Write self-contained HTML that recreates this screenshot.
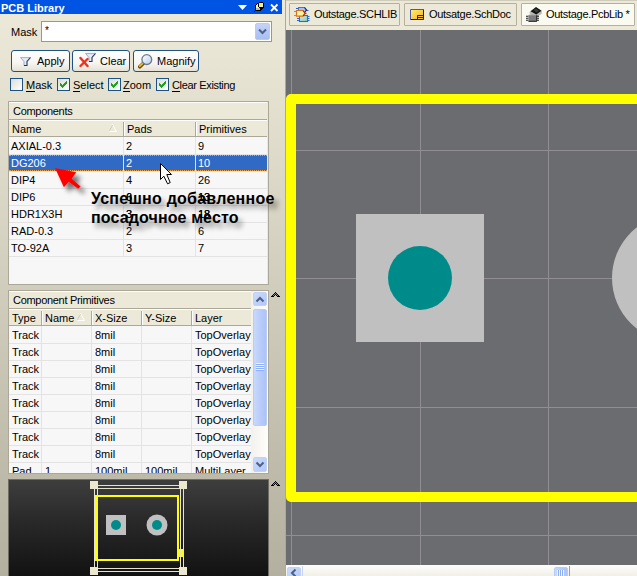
<!DOCTYPE html>
<html><head><meta charset="utf-8">
<style>
*{box-sizing:border-box}
html,body{margin:0;padding:0;width:637px;height:576px;overflow:hidden;background:#ECE9D8;font-family:"Liberation Sans",sans-serif;font-size:11px;color:#000}
.a{position:absolute}
#panel{left:0;top:0;width:285px;height:576px;background:linear-gradient(#ECE9D8 0px,#ECE9D8 14px,#B4B09F 576px)}
#sep{left:285px;top:0;width:1px;height:576px;background:#ACA899}
#title{left:0;top:0;width:282px;height:14px;background:#0054E3;color:#fff;font-weight:bold;font-size:11px;line-height:14px;padding-left:1px;padding-top:1px;overflow:hidden}
#canvas{left:286px;top:30px;width:351px;height:535px;background:#6B6C70;overflow:hidden}
#tabs{left:286px;top:0;width:351px;height:30px;background:#ECE9D8;border-top:1px solid #D0CCBC}
.tab{position:absolute;top:2px;height:23px;border:1px solid #B4B09C;border-radius:1px;background:#ECE9D8;line-height:21px;white-space:nowrap}
.tab.act{background:#FBFAF0}
#hscroll{left:286px;top:565px;width:351px;height:11px;background:linear-gradient(#FDFDFB,#F1EFE8)}
.btn{height:22px;border:1px solid #1F5284;border-radius:3px;background:linear-gradient(#FFFFFF,#F6F5F1 60%,#E4E1D6)}
.btn span{position:absolute;top:4px;line-height:13px}
.cb{width:13px;height:13px;border:1px solid #1C5180;background:linear-gradient(135deg,#DCDBD5,#FFFFFF)}
.lbl{top:79px;line-height:13px}
u{text-decoration:none;border-bottom:1px solid #000;display:inline-block;line-height:11px}
.box{border:1px solid #ACA899;border-right-color:#ACA899;border-bottom-color:#ACA899;background:#ECE9D8}
.hdr1{background:#ECE9D8;border-top:1px solid #fff;border-bottom:1px solid #ACA899}
.hdr2{background:#ECE9D8;border-top:1px solid #fff;border-bottom:1px solid #ACA899}
.vsep{width:1px;background:#ACA899;box-shadow:1px 0 0 #fff}
.gl{height:1px;background:#E3E3E3}
.cell{line-height:13px;white-space:nowrap}
.sel{background:#316AC5;border-top:1px dotted #F0A030;border-bottom:1px dotted #F0A030}
.sbb{border-radius:2px;background:linear-gradient(135deg,#CCDAFB,#B2C8F8);border:1px solid #C2D2F6}
.sbt{border-radius:2px;background:linear-gradient(90deg,#C9D8FC,#B9CDFA 50%,#ABC3F6);border:1px solid #B8CCF4}
.tt{position:absolute;top:4px;line-height:13px;letter-spacing:-0.3px}
.rus{font-weight:bold;font-size:16px;line-height:19px;letter-spacing:0.25px;white-space:nowrap;text-shadow:4px 5px 5px rgba(0,0,0,0.42)}
</style></head><body>
<div id="panel" class="a"></div>
<div id="sep" class="a"></div>
<!--COMP-->
<div class="a box" style="left:8px;top:101px;width:261px;height:184px"></div>
<div class="a hdr1" style="left:9px;top:102px;width:258px;height:18px"><span class="a" style="left:4px;top:2px;letter-spacing:-0.3px">Components</span></div>
<div class="a hdr2" style="left:9px;top:120px;width:258px;height:17px"></div>
<div class="a" style="left:12px;top:123px;line-height:13px">Name</div>
<svg class="a" style="left:108px;top:124px" width="10" height="9"><path d="M4.5 0.5 L8.5 7.5 H0.5 Z" fill="none" stroke="#FFFFFF" stroke-width="1"/><path d="M4.5 1 L0.8 7.5" stroke="#C9C6B8" stroke-width="1"/></svg>
<div class="a vsep" style="left:123px;top:122px;height:14px"></div>
<div class="a" style="left:127px;top:123px;line-height:13px">Pads</div>
<div class="a vsep" style="left:195px;top:122px;height:14px"></div>
<div class="a" style="left:199px;top:123px;line-height:13px">Primitives</div>
<div class="a" style="left:9px;top:137px;width:258px;height:147px;background:#F7F7F7"></div>
<div class="a cell" style="left:11px;top:140px;">AXIAL-0.3</div>
<div class="a cell" style="left:126px;top:140px;">2</div>
<div class="a cell" style="left:198px;top:140px;">9</div>
<div class="a gl" style="left:9px;top:154px;width:258px"></div>
<div class="a sel" style="left:9px;top:155px;width:258px;height:16px"></div>
<div class="a cell" style="left:11px;top:157px;color:#fff;">DG206</div>
<div class="a cell" style="left:126px;top:157px;color:#fff;">2</div>
<div class="a cell" style="left:198px;top:157px;color:#fff;">10</div>
<div class="a gl" style="left:9px;top:171px;width:258px"></div>
<div class="a cell" style="left:11px;top:174px;">DIP4</div>
<div class="a cell" style="left:126px;top:174px;">4</div>
<div class="a cell" style="left:198px;top:174px;">26</div>
<div class="a gl" style="left:9px;top:188px;width:258px"></div>
<div class="a cell" style="left:11px;top:191px;">DIP6</div>
<div class="a cell" style="left:126px;top:191px;">6</div>
<div class="a cell" style="left:198px;top:191px;">13</div>
<div class="a gl" style="left:9px;top:205px;width:258px"></div>
<div class="a cell" style="left:11px;top:208px;">HDR1X3H</div>
<div class="a cell" style="left:126px;top:208px;">3</div>
<div class="a cell" style="left:198px;top:208px;">18</div>
<div class="a gl" style="left:9px;top:222px;width:258px"></div>
<div class="a cell" style="left:11px;top:225px;">RAD-0.3</div>
<div class="a cell" style="left:126px;top:225px;">2</div>
<div class="a cell" style="left:198px;top:225px;">6</div>
<div class="a gl" style="left:9px;top:239px;width:258px"></div>
<div class="a cell" style="left:11px;top:242px;">TO-92A</div>
<div class="a cell" style="left:126px;top:242px;">3</div>
<div class="a cell" style="left:198px;top:242px;">7</div>
<div class="a gl" style="left:9px;top:256px;width:258px"></div>
<div class="a" style="left:123px;top:137px;width:1px;height:119px;background:#E3E3E3"></div>
<div class="a" style="left:195px;top:137px;width:1px;height:119px;background:#E3E3E3"></div>
<!--/COMP-->
<!--PRIM-->
<div class="a box" style="left:8px;top:290px;width:261px;height:184px"></div>
<div class="a hdr1" style="left:9px;top:291px;width:242px;height:18px"><span class="a" style="left:4px;top:2px;letter-spacing:-0.3px">Component Primitives</span></div>
<div class="a hdr2" style="left:9px;top:309px;width:242px;height:17px"></div>
<div class="a" style="left:12px;top:312px;line-height:13px">Type</div>
<div class="a vsep" style="left:41px;top:311px;height:14px"></div>
<div class="a" style="left:45px;top:312px;line-height:13px">Name</div>
<div class="a vsep" style="left:91px;top:311px;height:14px"></div>
<div class="a" style="left:95px;top:312px;line-height:13px">X-Size</div>
<div class="a vsep" style="left:141px;top:311px;height:14px"></div>
<div class="a" style="left:145px;top:312px;line-height:13px">Y-Size</div>
<div class="a vsep" style="left:191px;top:311px;height:14px"></div>
<div class="a" style="left:195px;top:312px;line-height:13px">Layer</div>
<svg class="a" style="left:76px;top:313px" width="10" height="9"><path d="M4.5 0.5 L8.5 7.5 H0.5 Z" fill="none" stroke="#FFFFFF" stroke-width="1"/><path d="M4.5 1 L0.8 7.5" stroke="#C9C6B8" stroke-width="1"/></svg>
<div class="a" style="left:9px;top:326px;width:242px;height:147px;background:#F7F7F7;overflow:hidden" id="prim">
<div class="a cell" style="left:3px;top:3px">Track</div>
<div class="a cell" style="left:86px;top:3px">8mil</div>
<div class="a cell" style="left:186px;top:3px">TopOverlay</div>
<div class="a gl" style="left:0;top:17px;width:242px"></div>
<div class="a cell" style="left:3px;top:20px">Track</div>
<div class="a cell" style="left:86px;top:20px">8mil</div>
<div class="a cell" style="left:186px;top:20px">TopOverlay</div>
<div class="a gl" style="left:0;top:34px;width:242px"></div>
<div class="a cell" style="left:3px;top:37px">Track</div>
<div class="a cell" style="left:86px;top:37px">8mil</div>
<div class="a cell" style="left:186px;top:37px">TopOverlay</div>
<div class="a gl" style="left:0;top:51px;width:242px"></div>
<div class="a cell" style="left:3px;top:54px">Track</div>
<div class="a cell" style="left:86px;top:54px">8mil</div>
<div class="a cell" style="left:186px;top:54px">TopOverlay</div>
<div class="a gl" style="left:0;top:68px;width:242px"></div>
<div class="a cell" style="left:3px;top:71px">Track</div>
<div class="a cell" style="left:86px;top:71px">8mil</div>
<div class="a cell" style="left:186px;top:71px">TopOverlay</div>
<div class="a gl" style="left:0;top:85px;width:242px"></div>
<div class="a cell" style="left:3px;top:88px">Track</div>
<div class="a cell" style="left:86px;top:88px">8mil</div>
<div class="a cell" style="left:186px;top:88px">TopOverlay</div>
<div class="a gl" style="left:0;top:102px;width:242px"></div>
<div class="a cell" style="left:3px;top:105px">Track</div>
<div class="a cell" style="left:86px;top:105px">8mil</div>
<div class="a cell" style="left:186px;top:105px">TopOverlay</div>
<div class="a gl" style="left:0;top:119px;width:242px"></div>
<div class="a cell" style="left:3px;top:122px">Track</div>
<div class="a cell" style="left:86px;top:122px">8mil</div>
<div class="a cell" style="left:186px;top:122px">TopOverlay</div>
<div class="a gl" style="left:0;top:136px;width:242px"></div>
<div class="a cell" style="left:3px;top:139px">Pad</div>
<div class="a cell" style="left:36px;top:139px">1</div>
<div class="a cell" style="left:86px;top:139px">100mil</div>
<div class="a cell" style="left:136px;top:139px">100mil</div>
<div class="a cell" style="left:186px;top:139px">MultiLayer</div>
<div class="a" style="left:32px;top:0;width:1px;height:147px;background:#E3E3E3"></div>
<div class="a" style="left:82px;top:0;width:1px;height:147px;background:#E3E3E3"></div>
<div class="a" style="left:132px;top:0;width:1px;height:147px;background:#E3E3E3"></div>
<div class="a" style="left:182px;top:0;width:1px;height:147px;background:#E3E3E3"></div>
</div>
<div class="a" style="left:251px;top:291px;width:17px;height:182px;background:linear-gradient(90deg,#F3F1EC,#FEFEFB)"></div>
<div class="a sbb" style="left:253px;top:292px;width:14px;height:14px"></div>
<svg class="a" style="left:255px;top:296px" width="10" height="7"><path d="M1.5 5.5 L5 2 L8.5 5.5" stroke="#4D6185" stroke-width="2" fill="none"/></svg>
<div class="a sbt" style="left:253px;top:309px;width:14px;height:117px"></div>
<svg class="a" style="left:256px;top:363px" width="8" height="8"><g stroke="#EEF3FE" stroke-width="1"><path d="M0 0.5H8M0 2.5H8M0 4.5H8M0 6.5H8"/></g><g stroke="#8CB0F8" stroke-width="1"><path d="M0 1.5H8M0 3.5H8M0 5.5H8M0 7.5H8"/></g></svg>
<div class="a sbb" style="left:253px;top:457px;width:14px;height:15px"></div>
<svg class="a" style="left:255px;top:461px" width="10" height="7"><path d="M1.5 1.5 L5 5 L8.5 1.5" stroke="#4D6185" stroke-width="2" fill="none"/></svg>
<svg class="a" style="left:271px;top:292px" width="9" height="5" shape-rendering="crispEdges"><path d="M4 1h1v1h-1zM3 2h1v1h-1zM5 2h1v1h-1zM2 3h1v1h-1zM6 3h1v1h-1z" fill="#8A887C"/><path d="M4 0h1v1h-1zM3 1h1v1h-1zM5 1h1v1h-1zM2 2h1v1h-1zM4 2h1v1h-1zM6 2h1v1h-1zM1 3h1v1h-1zM3 3h1v1h-1zM5 3h1v1h-1zM7 3h1v1h-1zM0 4h1v1h-1zM1 4h1v1h-1zM2 4h1v1h-1zM6 4h1v1h-1zM7 4h1v1h-1zM8 4h1v1h-1z" fill="#000"/></svg>
<!--/PRIM-->
<!--PREV-->
<div class="a" style="left:8px;top:479px;width:261px;height:97px;background:#6E6C64"></div>
<div class="a" style="left:9px;top:480px;width:259px;height:96px;background:linear-gradient(#3E3E3E,#2A2A2A 40%,#121212)"></div>
<svg class="a" style="left:0;top:470px" width="290" height="106">

<rect x="96" y="26" width="82" height="64" stroke="#FFFF00" stroke-width="2" fill="none" shape-rendering="crispEdges"/>
<rect x="179" y="79" width="4" height="8" fill="#FFFF00" shape-rendering="crispEdges"/>
<rect x="180" y="81" width="1" height="4" fill="#1A1A1A" shape-rendering="crispEdges"/>
<rect x="106" y="45" width="20" height="20" fill="#C0C0C0"/>
<circle cx="116" cy="55" r="5" fill="#008B8B"/>
<circle cx="157" cy="55" r="10.5" fill="#C0C0C0"/>
<circle cx="157" cy="55" r="5" fill="#008B8B"/>
<g stroke="#E8E4CC" stroke-width="1" fill="none">
<path d="M94 15.5 H183 M94 18.5 H183 M94 98.5 H183 M94 101.5 H183"/>
<path d="M94.5 15 V101 M97.5 15 V101 M180.5 15 V101 M183.5 15 V101"/>
</g>
<g fill="#ECE8D0">
<rect x="90" y="11" width="8" height="8"/><rect x="179" y="11" width="8" height="8"/>
<rect x="90" y="97" width="8" height="8"/><rect x="179" y="97" width="8" height="8"/>
</g>
</svg>
<svg class="a" style="left:271px;top:481px" width="9" height="5" shape-rendering="crispEdges"><path d="M4 1h1v1h-1zM3 2h1v1h-1zM5 2h1v1h-1zM2 3h1v1h-1zM6 3h1v1h-1z" fill="#8A887C"/><path d="M4 0h1v1h-1zM3 1h1v1h-1zM5 1h1v1h-1zM2 2h1v1h-1zM4 2h1v1h-1zM6 2h1v1h-1zM1 3h1v1h-1zM3 3h1v1h-1zM5 3h1v1h-1zM7 3h1v1h-1zM0 4h1v1h-1zM1 4h1v1h-1zM2 4h1v1h-1zM6 4h1v1h-1zM7 4h1v1h-1zM8 4h1v1h-1z" fill="#000"/></svg>
<!--/PREV-->
<div id="title" class="a">PCB Library</div>
<svg class="a" style="left:236px;top:0px" width="46" height="14" shape-rendering="crispEdges">
<path d="M2 5 H11 L6.5 10 Z" fill="#fff" shape-rendering="auto"/>
<g transform="translate(16,0)">
<path d="M7 2 H11 V3 H12 V8 H11 V9 H10 V10 H9 V11 H3 V5 H4 V4 H5 V3 H7 Z" fill="#000"/>
<rect x="7" y="3" width="4" height="4" fill="#E8E8D8"/>
<rect x="7" y="3" width="3" height="2" fill="#FFFF00"/>
<rect x="8" y="5" width="1" height="1" fill="#FFFF00"/>
<rect x="4" y="5" width="2" height="3" fill="#FFFF40"/>
<rect x="5" y="4" width="1" height="1" fill="#FFFF40"/>
<rect x="6" y="7" width="1" height="1" fill="#FFFF40"/>
<rect x="4" y="8" width="4" height="2" fill="#B8B8B0"/>
<rect x="5" y="6" width="1" height="2" fill="#F0F0E8"/>
<rect x="2" y="11" width="1" height="1" fill="#000"/>
</g>
<path d="M35 4.5 L41.5 11 M41.5 4.5 L35 11" stroke="#fff" stroke-width="1.8" shape-rendering="auto"/>
</svg>
<div class="a" style="left:11px;top:26px;line-height:13px">Mask</div>
<div class="a" id="maskin" style="left:41px;top:21px;width:231px;height:21px;border:1px solid #7F9DB9;background:#fff"></div>
<div class="a" style="left:45px;top:24px;font-size:10px;line-height:13px">*</div>
<div class="a" style="left:255px;top:23px;width:15px;height:17px;border-radius:2px;background:linear-gradient(#C6D3F7,#B4C8F6 50%,#A9BEF1);border:1px solid #B9CBF3"></div>
<svg class="a" style="left:258px;top:28px" width="9" height="7"><path d="M1 1.5 L4.5 5 L8 1.5" stroke="#4D6185" stroke-width="2" fill="none"/></svg>
<div class="btn a" style="left:11px;top:50px;width:59px"><svg class="a" style="left:8px;top:6px" width="13" height="10"><path d="M0.5 0.5 H10.5 L7 4.5 V8.5 H4 V4.5 Z" fill="#E6EBF5"/><path d="M0.5 0.5 H10.5" stroke="#A4B6DA" stroke-width="1.2"/><path d="M0.5 0.5 L4 4.5 V8.5" stroke="#9AAAC8" stroke-width="1" fill="none"/><path d="M10.5 0.5 L7 4.5 V8.5 H4" stroke="#1E3462" stroke-width="1.1" fill="none"/></svg><span style="left:25px">Apply</span></div>
<div class="btn a" style="left:72px;top:50px;width:58px"><svg class="a" style="left:6px;top:1px" width="26" height="17"><g transform="translate(6,1)"><path d="M0.5 0.5 H10.5 L7 4.5 V8.5 H4 V4.5 Z" fill="#E6EBF5"/><path d="M0.5 0.5 H10.5" stroke="#A4B6DA" stroke-width="1.2"/><path d="M0.5 0.5 L4 4.5 V8.5" stroke="#9AAAC8" stroke-width="1" fill="none"/><path d="M10.5 0.5 L7 4.5 V8.5 H4" stroke="#1E3462" stroke-width="1.1" fill="none"/></g><path d="M1.5 6 L8.5 14 M8.5 7 L1.5 14" stroke="#F0301A" stroke-width="2.4" stroke-linecap="round"/></svg><span style="left:27px">Clear</span></div>
<div class="btn a" style="left:133px;top:50px;width:66px"><svg class="a" style="left:4px;top:3px" width="16" height="16"><path d="M1.8 12.8 L5.2 9.4" stroke="#6A4A08" stroke-width="3.6" stroke-linecap="round"/><path d="M1.8 12.2 L5 9.2" stroke="#E8C040" stroke-width="1.8" stroke-linecap="round"/><circle cx="8.8" cy="5.6" r="4.9" fill="url(#lens)" stroke="#707888" stroke-width="1.3"/><defs><linearGradient id="lens" x1="0" y1="0" x2="1" y2="1"><stop offset="0" stop-color="#FFFFFF"/><stop offset="1" stop-color="#B9CCF0"/></linearGradient></defs></svg><span style="left:23px">Magnify</span></div>
<div class="cb a" style="left:10px;top:78px"></div><div class="a lbl" style="left:26px"><u>M</u>ask</div>
<div class="cb a on" style="left:57px;top:78px"><svg class="a" style="left:2px;top:2px" width="7" height="7" shape-rendering="crispEdges"><path d="M6 0h1v3h-1zM5 1h1v3h-1zM4 2h1v3h-1zM3 3h1v3h-1zM2 4h1v3h-1zM1 3h1v3h-1zM0 2h1v3h-1z" fill="#21A121"/></svg></div><div class="a lbl" style="left:73px"><u>S</u>elect</div>
<div class="cb a on" style="left:108px;top:78px"><svg class="a" style="left:2px;top:2px" width="7" height="7" shape-rendering="crispEdges"><path d="M6 0h1v3h-1zM5 1h1v3h-1zM4 2h1v3h-1zM3 3h1v3h-1zM2 4h1v3h-1zM1 3h1v3h-1zM0 2h1v3h-1z" fill="#21A121"/></svg></div><div class="a lbl" style="left:123px"><u>Z</u>oom</div>
<div class="cb a on" style="left:156px;top:78px"><svg class="a" style="left:2px;top:2px" width="7" height="7" shape-rendering="crispEdges"><path d="M6 0h1v3h-1zM5 1h1v3h-1zM4 2h1v3h-1zM3 3h1v3h-1zM2 4h1v3h-1zM1 3h1v3h-1zM0 2h1v3h-1z" fill="#21A121"/></svg></div><div class="a lbl" style="left:172px;letter-spacing:-0.35px"><u>C</u>lear Existing</div>
<div id="tabs" class="a">
  <div class="tab" style="left:3px;width:111px"><span class="tt" style="left:24px">Outstage.SCHLIB</span>
<svg class="a" style="left:2px;top:0px" width="20" height="20">
<defs><linearGradient id="y1" x1="0" y1="0" x2="1" y2="1"><stop offset="0" stop-color="#FFFFF0"/><stop offset="1" stop-color="#FFE860"/></linearGradient>
<linearGradient id="t1" x1="0" y1="0" x2="1" y2="1"><stop offset="0" stop-color="#C8F0E0"/><stop offset="1" stop-color="#90C8B8"/></linearGradient></defs>
<path d="M4 4.5 H6.5 M14 6.5 H16.5" stroke="#2060D0" stroke-width="1.2"/>
<path d="M6.5 3.5 H12.5 L14.5 6 L12.5 8.5 H6.5 Z" fill="#A8C0F4" stroke="#3A78E8" stroke-width="1.1"/>
<path d="M12.5 3.5 L14.5 6 L12.5 8.5" stroke="#1A2A6A" stroke-width="1.1" fill="none"/>
<path d="M5 14.5 H7.5 M5 16.5 H7.5 M15.5 12.5 H17.5 M15.5 14.5 H17.5 M15.5 16.5 H17.5" stroke="#2A68D8" stroke-width="1.2"/>
<rect x="7.5" y="11.5" width="8" height="6" fill="url(#t1)" stroke="#2A68D8" stroke-width="1.1"/>
<path d="M2 7.5 H4.5 M2 11.5 H4.5" stroke="#F08010" stroke-width="1.2"/>
<path d="M4.5 6.5 H11 L13 9.3 L11 12.2 H4.5 Z" fill="url(#y1)" stroke="#E07010" stroke-width="1.2"/>
<path d="M11 6.5 L13 9.3 L11 12.2 M13 9.3 H14.5" stroke="#A02000" stroke-width="1" fill="none"/>
</svg></div>
  <div class="tab" style="left:118px;width:113px"><span class="tt" style="left:24px">Outsatge.SchDoc</span>
<svg class="a" style="left:5px;top:5px" width="15" height="12">
<defs><linearGradient id="sd" x1="0" y1="0" x2="1" y2="1"><stop offset="0" stop-color="#FFF070"/><stop offset="1" stop-color="#F5B020"/></linearGradient></defs>
<rect x="0.5" y="0.5" width="13" height="10" fill="url(#sd)"/>
<path d="M0.5 10.5 V0.5 H13.5" stroke="#4A5AA8" stroke-width="1" fill="none"/>
<path d="M13.5 0.5 V10.5 H0.5" stroke="#2A1E10" stroke-width="1" fill="none"/>
<path d="M7.5 10.5 V6.5 H13.5 M8 8.5 H13" stroke="#3A2A10" stroke-width="1" fill="none"/>
<path d="M8 7.5 H13 M8 9.5 H13" stroke="#F8C030" stroke-width="1"/>
</svg></div>
  <div class="tab act" style="left:235px;width:114px"><span class="tt" style="left:24px">Outstage.PcbLib *</span>
<svg class="a" style="left:2px;top:0px" width="20" height="20">
<path d="M5.5 8 L12 3.5 L18 7 L17.5 10 L12.5 13 L6 10.5 Z" fill="#B8B8B4"/>
<path d="M6.5 7.3 L12 3 L17.5 6.8 L12.3 10.6 Z" fill="#141414"/>
<path d="M9.5 6 L12 4.5 L15 6.8 L12.5 8.5 Z" fill="#3A3A3A"/>
<path d="M2 12.3 H4.5 M2 14.3 H4.5 M2 16.3 H4.5 M12.5 12.3 H15 M12.5 14.3 H15 M12.5 16.3 H15" stroke="#1A1A1A" stroke-width="1.1"/>
<rect x="4.5" y="11" width="8.2" height="6.7" fill="#7E7E7E"/>
<path d="M4.5 17.3 H12.7 V11" stroke="#222" stroke-width="1" fill="none"/>
<path d="M4.5 11.2 H12.5" stroke="#9A9A9A" stroke-width="0.8"/>
</svg></div>
</div>
<div id="canvas" class="a"><svg width="351" height="535" style="position:absolute;left:0;top:0">
<g fill="#918E93">
<rect x="5" y="0" width="1" height="535"/><rect x="134" y="0" width="1" height="535"/><rect x="262" y="0" width="1" height="535"/>
<rect x="0" y="120" width="351" height="1"/><rect x="0" y="248" width="351" height="1"/><rect x="0" y="377" width="351" height="1"/><rect x="0" y="505" width="351" height="1"/>
</g>
<path d="M5 69 H400 V467 H5 Z" stroke="#FFFF00" stroke-width="10" stroke-linecap="round" stroke-linejoin="round" fill="none"/>
<rect x="70" y="184" width="128" height="128" fill="#C0C0C0"/>
<circle cx="134" cy="248" r="32" fill="#008B8B"/>
<circle cx="390" cy="248" r="64" fill="#C0C0C0"/>
</svg></div>
<div id="hscroll" class="a"></div>
<div class="a sbb" style="left:287px;top:567px;width:14px;height:14px"></div>
<svg class="a" style="left:289px;top:568px" width="9" height="9"><path d="M6.5 1.5 L3 5 L6.5 8.5" stroke="#4D6185" stroke-width="2" fill="none"/></svg>
<div class="a" style="left:302px;top:566px;width:1px;height:10px;background:#C8D4EC"></div>
<div class="a sbt" style="left:554px;top:567px;width:14px;height:12px"></div>
<svg class="a" style="left:557px;top:570px" width="8" height="6"><path d="M0.5 0 V6 M2.5 0 V6 M4.5 0 V6 M6.5 0 V6" stroke="#F0F4FF" stroke-width="1"/><path d="M1.5 0 V6 M3.5 0 V6 M5.5 0 V6" stroke="#8CB0F0" stroke-width="1"/></svg>
<div class="a" style="left:569px;top:566px;width:1px;height:10px;background:#7FA2E0"></div>
<!--OVL-->
<svg class="a" style="left:0;top:0" width="290" height="260">
<defs><filter id="sh" x="-50%" y="-50%" width="200%" height="200%"><feGaussianBlur in="SourceAlpha" stdDeviation="2.5"/><feOffset dx="5" dy="5"/><feComponentTransfer><feFuncA type="linear" slope="0.55"/></feComponentTransfer><feMerge><feMergeNode/><feMergeNode in="SourceGraphic"/></feMerge></filter></defs>
<path d="M55 168 L76.2 172.3 L71.7 178.7 L80.6 186.5 L78.1 188.7 L68.7 181.8 L63.9 187.3 Z" fill="#FF0000" filter="url(#sh)"/>
</svg>
<div class="a rus" style="left:91px;top:189px">Успешно добавленное</div>
<div class="a rus" style="left:91px;top:208px;letter-spacing:0.12px">посадочное место</div>
<svg class="a" style="left:160px;top:163px" width="13" height="23">
<path d="M0.5 0.5 V16.5 L3.8 13.2 L7.6 20.8 L10.2 19.6 L6.8 11.5 H11.5 Z" fill="#fff" stroke="#000" stroke-width="1" stroke-linejoin="miter"/>
</svg>
<div class="a cell" style="left:126px;top:191px;">6</div>
<div class="a cell" style="left:198px;top:191px;">13</div>
<div class="a cell" style="left:126px;top:208px;">3</div>
<div class="a cell" style="left:198px;top:208px;">18</div>
<!--/OVL-->
</body></html>
